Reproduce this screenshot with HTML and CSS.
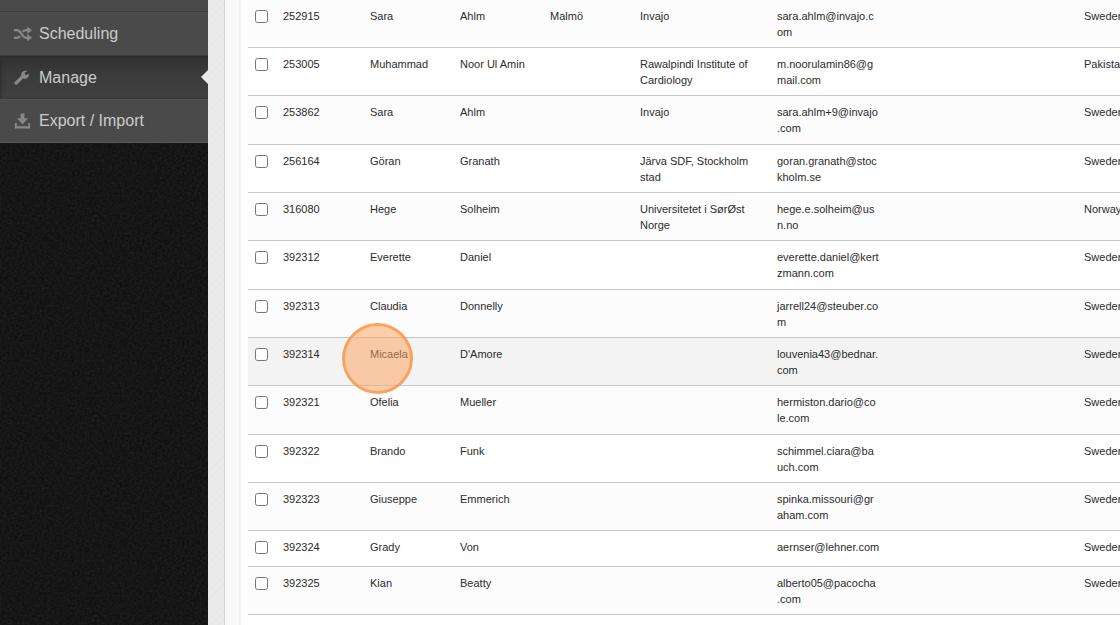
FILE: index.html
```html
<!DOCTYPE html>
<html lang="en">
<head>
  <meta charset="UTF-8" />
  <title>Manage users</title>
  <link rel="stylesheet" href="styles.css">
</head>

<body>
  <div class="page">
    <nav class="sidebar">
      <ul class="menu">
        <li class="spacer"></li>
        <li>
          <a href="#scheduling">
            <svg class="icon" viewBox="0 0 20 16" fill="none" stroke="currentColor" stroke-width="2.4">
              <path d="M1 4h3c5 0 5 8 10 8h2M1 12h3c1.600 0 2.600-.7 3.400-1.700M10 5.600C11 4.600 12 4 14 4h2" />
              <path d="M15 0v8L20 4zM15 8v8l5-4z" fill="currentColor" stroke="none" />
            </svg>
            Scheduling
          </a>
        </li>
        <li class="active">
          <a href="#manage">
            <svg class="icon" viewBox="0 0 20 16">
              <path d="M3.200 13.400L10 6.600" fill="none" stroke="currentColor" stroke-width="3.600" stroke-linecap="round" />
              <path d="M16.600 3.400l-2.700 1.400-1.500-.9V2.300L15 .7C11.900-.6 8.400 1.300 8.600 4.900c.1 2.600 2.300 4 4.300 3.800 2.600-.2 4.400-2.600 3.700-5.300z" fill="currentColor" />
            </svg>
            Manage
          </a>
        </li>
        <li>
          <a href="#export">
            <svg class="icon" viewBox="0 0 20 16" fill="currentColor">
              <path d="M8 0h4v5h4L10 11.500 4 5h4z" />
              <path d="M2 10h2v3.500h12V10h2v6H2z" />
            </svg>
            Export / Import
          </a>
        </li>
      </ul>
    </nav>

    <main class="content">
      <div class="panel">
        <table class="users">
          <colgroup>
            <col class="col-check"><col class="col-id"><col class="col-name"><col class="col-name"><col class="col-name">
            <col class="col-org"><col class="col-email"><col class="col-empty"><col class="col-country">
          </colgroup>
          <tbody>
            <tr><td><input type="checkbox" aria-label="Select 252915"></td><td>252915</td><td>Sara</td><td>Ahlm</td><td>Malmö</td><td>Invajo</td><td class="email">sara.ahlm@invajo.c<wbr>om</td><td></td><td>Sweden</td></tr>
            <tr><td><input type="checkbox" aria-label="Select 253005"></td><td>253005</td><td>Muhammad</td><td>Noor Ul Amin</td><td></td><td>Rawalpindi Institute of Cardiology</td><td class="email">m.noorulamin86@g<wbr>mail.com</td><td></td><td>Pakistan</td></tr>
            <tr><td><input type="checkbox" aria-label="Select 253862"></td><td>253862</td><td>Sara</td><td>Ahlm</td><td></td><td>Invajo</td><td class="email">sara.ahlm+9@invajo<wbr>.com</td><td></td><td>Sweden</td></tr>
            <tr><td><input type="checkbox" aria-label="Select 256164"></td><td>256164</td><td>Göran</td><td>Granath</td><td></td><td>Järva SDF, Stockholm stad</td><td class="email">goran.granath@stoc<wbr>kholm.se</td><td></td><td>Sweden</td></tr>
            <tr><td><input type="checkbox" aria-label="Select 316080"></td><td>316080</td><td>Hege</td><td>Solheim</td><td></td><td>Universitetet i SørØst Norge</td><td class="email">hege.e.solheim@us<wbr>n.no</td><td></td><td>Norway</td></tr>
            <tr><td><input type="checkbox" aria-label="Select 392312"></td><td>392312</td><td>Everette</td><td>Daniel</td><td></td><td></td><td class="email">everette.daniel@kert<wbr>zmann.com</td><td></td><td>Sweden</td></tr>
            <tr><td><input type="checkbox" aria-label="Select 392313"></td><td>392313</td><td>Claudia</td><td>Donnelly</td><td></td><td></td><td class="email">jarrell24@steuber.co<wbr>m</td><td></td><td>Sweden</td></tr>
            <tr class="hovered"><td><input type="checkbox" aria-label="Select 392314"></td><td>392314</td><td><span class="target">Micaela<span class="click-marker"></span></span></td><td>D'Amore</td><td></td><td></td><td class="email">louvenia43@bednar.<wbr>com</td><td></td><td>Sweden</td></tr>
            <tr><td><input type="checkbox" aria-label="Select 392321"></td><td>392321</td><td>Ofelia</td><td>Mueller</td><td></td><td></td><td class="email">hermiston.dario@co<wbr>le.com</td><td></td><td>Sweden</td></tr>
            <tr><td><input type="checkbox" aria-label="Select 392322"></td><td>392322</td><td>Brando</td><td>Funk</td><td></td><td></td><td class="email">schimmel.ciara@ba<wbr>uch.com</td><td></td><td>Sweden</td></tr>
            <tr><td><input type="checkbox" aria-label="Select 392323"></td><td>392323</td><td>Giuseppe</td><td>Emmerich</td><td></td><td></td><td class="email">spinka.missouri@gr<wbr>aham.com</td><td></td><td>Sweden</td></tr>
            <tr><td><input type="checkbox" aria-label="Select 392324"></td><td>392324</td><td>Grady</td><td>Von</td><td></td><td></td><td class="email">aernser@lehner.com</td><td></td><td>Sweden</td></tr>
            <tr><td><input type="checkbox" aria-label="Select 392325"></td><td>392325</td><td>Kian</td><td>Beatty</td><td></td><td></td><td class="email">alberto05@pacocha<wbr>.com</td><td></td><td>Sweden</td></tr>
          </tbody>
        </table>
      </div>
    </main>
  </div>
</body>
</html>
```
FILE: styles.css
```css
* {
  box-sizing: border-box;
}

body {
  margin: 0;
  font-family: "Liberation Sans", Arial, sans-serif;
  color: #2c2c2c;
  overflow: hidden;
}

.page {
  display: flex;
  min-height: 100vh;
}

/* Sidebar */
.sidebar {
  flex: 0 0 208px;
  background-color: #111;
  background-image: url("data:image/svg+xml,%3Csvg xmlns='http://www.w3.org/2000/svg' width='200' height='200'%3E%3Cfilter id='n'%3E%3CfeTurbulence type='fractalNoise' baseFrequency='.4' numOctaves='2' stitchTiles='stitch'/%3E%3CfeColorMatrix values='0 0 0 0 1 0 0 0 0 1 0 0 0 0 1 .1 0 0 0 -.03'/%3E%3C/filter%3E%3Crect width='200' height='200' filter='url(%23n)'/%3E%3C/svg%3E");
}

.menu {
  margin: 0;
  padding: 0;
  list-style: none;
}

.menu li {
  background: #4a4a4a;
  border-bottom: 1px solid #3a3a3a;
}

.menu li:last-child {
  border-bottom-color: #5a5a5a;
}

.menu .spacer {
  height: 12px;
}

.menu a {
  display: flex;
  align-items: center;
  gap: 7px;
  height: 43px;
  padding-left: 13px;
  border-top: 1px solid #505050;
  color: #ccc;
  font-size: 16px;
  text-decoration: none;
}

.menu .active {
  position: relative;
  background: linear-gradient(#303030, #3a3a3a 40%, #404040);
  box-shadow: inset 4px 0 4px -3px #2c2c2c;
}

.menu .active a {
  height: 42px;
  border-top-color: #2c2c2c;
}

.menu .active::after {
  content: "";
  position: absolute;
  right: 0;
  top: 14px;
  border: 7px solid transparent;
  border-left: 0;
  border-right-color: #ebebeb;
}

.icon {
  width: 19px;
  height: 16px;
  color: #888;
}

/* Content */
.content {
  flex: 1;
  min-width: 0;
  padding-left: 16px;
  background: repeating-linear-gradient(135deg, #ebebeb 0 3px, #e9e9e9 3px 5px);
}

.panel {
  min-height: 100vh;
  padding-left: 23px;
  border-left: 1px solid #d4d4d4;
  background: linear-gradient(90deg, #f9f9f9 14px, #efefef 14px 16px, #fff 16px);
  overflow: hidden;
}

.users {
  width: 960px;
  border-collapse: collapse;
  table-layout: fixed;
  font-size: 11px;
  line-height: 16px;
}

.col-check { width: 27px; }
.col-id { width: 87px; }
.col-name { width: 90px; }
.col-org { width: 137px; }
.col-email { width: 120px; }
.col-empty { width: 187px; }

.users td {
  height: 36px;
  padding: 8px 8px 7px;
  border-bottom: 1px solid #c8c8c8;
  vertical-align: top;
}

.users td:first-child {
  padding-left: 7px;
}

.users tr:nth-child(odd) {
  background: #fcfcfc;
}

/* every third row is a pixel taller */
.users tr:nth-child(3n) td {
  padding-bottom: 8px;
}

.users tr.hovered {
  background: #f3f3f3;
}

.users input {
  display: block;
  width: 13px;
  height: 13px;
  margin: 2px 0 0;
}

/* Click highlight */
.target {
  position: relative;
}

.click-marker {
  position: absolute;
  left: -28px;
  top: -25px;
  width: 71px;
  height: 71px;
  border: 3px solid rgba(247, 148, 70, .75);
  border-radius: 50%;
  background: rgba(255, 160, 90, .5);
}
```
